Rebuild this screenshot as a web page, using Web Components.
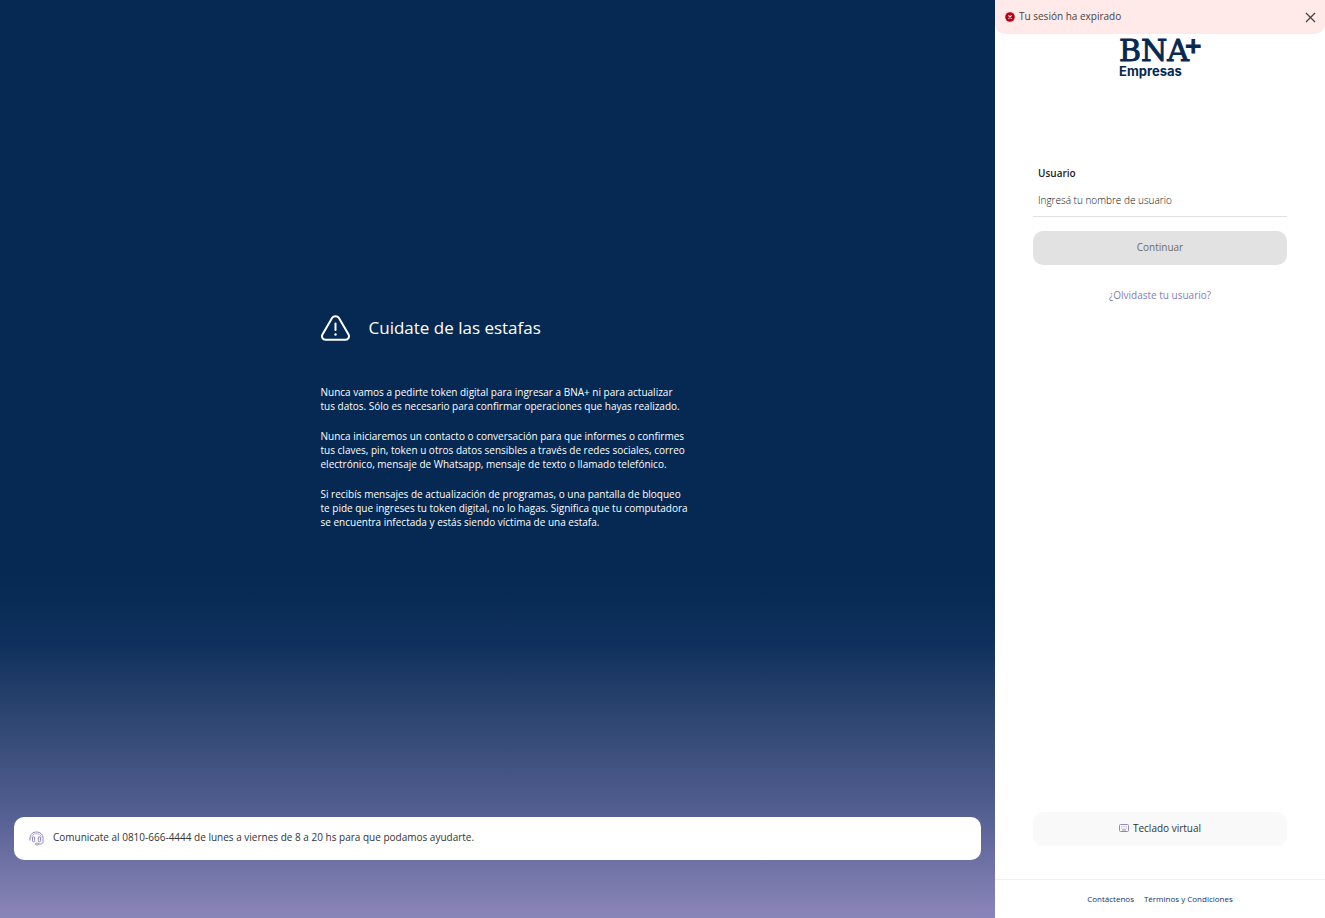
<!DOCTYPE html>
<html lang="es">
<head>
<meta charset="utf-8">
<meta name="viewport" content="width=device-width, initial-scale=1">
<title>BNA+ Empresas</title>
<style>
  body { margin: 0; font-family: "Open Sans", sans-serif; font-size: 10px; line-height: 14px; color: #333; background: #fff; }
</style>
</head>
<body>
<bna-login-page>
  <bna-fraud-warning slot="info" heading="Cuidate de las estafas">
    <p>Nunca vamos a pedirte token digital para ingresar a BNA+ ni para actualizar<br>tus datos. Sólo es necesario para confirmar operaciones que hayas realizado.</p>
    <p>Nunca iniciaremos un contacto o conversación para que informes o confirmes<br>tus claves, pin, token u otros datos sensibles a través de redes sociales, correo<br>electrónico, mensaje de Whatsapp, mensaje de texto o llamado telefónico.</p>
    <p>Si recibís mensajes de actualización de programas, o una pantalla de bloqueo<br>te pide que ingreses tu token digital, no lo hagas. Significa que tu computadora<br>se encuentra infectada y estás siendo víctima de una estafa.</p>
  </bna-fraud-warning>
  <bna-contact-bar slot="contact">Comunicate al 0810-666-4444 de lunes a viernes de 8 a 20 hs para que podamos ayudarte.</bna-contact-bar>
  <bna-alert slot="alert">Tu sesión ha expirado</bna-alert>
  <bna-logo slot="logo"></bna-logo>
  <bna-user-form slot="form"></bna-user-form>
  <bna-keyboard-button slot="keyboard">Teclado virtual</bna-keyboard-button>
  <bna-footer slot="footer"></bna-footer>
</bna-login-page>
<script>
  function define(name, html) {
    const template = document.createElement('template');
    template.innerHTML = html;
    customElements.define(name, class extends HTMLElement {
      constructor() {
        super();
        this.attachShadow({ mode: 'open' }).append(template.content.cloneNode(true));
      }
      connectedCallback() {
        const h = this.shadowRoot.querySelector('[data-heading]');
        if (h) h.textContent = this.getAttribute('heading');
      }
    });
  }

  define('bna-login-page', `
    <style>
      :host { display: grid; grid-template-columns: minmax(0, 1fr) 330px; min-height: 100vh; }
      .info { display: flex; flex-direction: column; background: linear-gradient(#052952 0%, #052952 63%, #0f305c 70%, #314873 79%, #525d90 88%, #8b86b9 100%); }
      .center { flex: 1; display: flex; align-items: center; justify-content: center; padding-top: 26px; }
      .contact { padding: 0 14px 58px; }
      aside { display: flex; flex-direction: column; background: #fff; }
      .logo { display: flex; justify-content: center; padding-top: 2px; }
      .form { padding: 86px 38px 0; }
      .keyboard { margin-top: auto; padding: 0 38px 33px; }
    </style>
    <main class="info">
      <div class="center"><slot name="info"></slot></div>
      <div class="contact"><slot name="contact"></slot></div>
    </main>
    <aside>
      <slot name="alert"></slot>
      <div class="logo"><slot name="logo"></slot></div>
      <div class="form"><slot name="form"></slot></div>
      <div class="keyboard"><slot name="keyboard"></slot></div>
      <slot name="footer"></slot>
    </aside>`);

  define('bna-fraud-warning', `
    <style>
      :host { display: block; width: 354px; color: #fff; }
      header { display: flex; align-items: center; gap: 19px; margin-bottom: 44px; }
      h1 { margin: 0; font-size: 17px; line-height: 26px; font-weight: 400; }
      svg { display: block; }
      .body { display: grid; gap: 16px; white-space: nowrap; font-weight: 400; }
      ::slotted(p) { margin: 0; }
    </style>
    <header>
      <svg width="29" height="26" viewBox="0 0 29 26" fill="none" stroke="#fff" stroke-width="2" stroke-linecap="round" aria-hidden="true">
        <path d="M11.2 2.8C12.6.6 16.4.6 17.8 2.8L27.4 19.2C28.9 21.8 27.4 24.7 24.4 24.7H4.6C1.6 24.7.1 21.8 1.6 19.2Z"/>
        <path d="M14.5 8.5V15"/><circle cx="14.5" cy="19.5" r="1.2" fill="#fff" stroke="none"/>
      </svg>
      <h1 data-heading></h1>
    </header>
    <div class="body"><slot></slot></div>`);

  define('bna-contact-bar', `
    <style>
      :host { display: flex; align-items: center; gap: 9px; padding: 13px 15px 14px; background: #fff; border-radius: 10px; color: #333; }
      svg { display: block; flex: none; }
      span { padding-bottom: 2px; }
    </style>
    <svg width="15" height="16" viewBox="0 -1 15 16" fill="none" stroke="#8b83bd" stroke-width="1" aria-hidden="true">
      <path d="M1 8V7.2C1 3.4 3.8 1 7.5 1S14 3.4 14 7.2V10.5C14 12.2 13 13 11.5 13H9.5"/>
      <path d="M2.7 6.5C3 4 5 2.7 7.5 2.7S12 4 12.3 6.5" stroke-width=".6"/>
      <rect x="3.5" y="5.8" width="2.2" height="5" rx="1.1"/><rect x="9.3" y="5.8" width="2.2" height="5" rx="1.1"/>
      <path d="M1 7.5V9.5"/><rect x="6.5" y="12.2" width="3" height="1.8" rx=".9"/>
    </svg>
    <span><slot></slot></span>`);

  define('bna-alert', `
    <style>
      :host { display: flex; align-items: center; gap: 4px; height: 34px; box-sizing: border-box; padding: 0 9px 0 10px; background: #ffe9e9; border-radius: 0 0 10px 10px; color: #444; }
      span { flex: 1; padding-bottom: 2px; }
      svg { display: block; flex: none; }
      button { border: 0; background: none; padding: 0; }
    </style>
    <svg width="10" height="10" viewBox="0 0 10 10" aria-hidden="true"><circle cx="5" cy="5" r="4.8" fill="#b90012"/><path d="M3.4 3.4 6.6 6.6M6.6 3.4 3.4 6.6" stroke="#fff" stroke-width="1.1"/></svg>
    <span role="alert"><slot></slot></span>
    <button type="button" aria-label="Cerrar"><svg width="11" height="11" viewBox="0 0 11 11" stroke="#444" stroke-width="1.3"><path d="M1 1 10 10M10 1 1 10"/></svg></button>`);

  define('bna-logo', `
    <style>
      :host { display: block; color: #052952; }
      svg { display: block; overflow: visible; }
      .name { font: 400 30px "DejaVu Serif", serif; }
      .plus { font: 700 22px "DejaVu Sans", sans-serif; }
      .segment { font: 700 13px Inter, sans-serif; }
    </style>
    <svg width="82" height="44" viewBox="0 0 82 44" fill="currentColor" role="img" aria-label="BNA+ Empresas">
      <text class="name" x="0" y="25" stroke="currentColor" stroke-width="1">BNA<tspan class="plus" x="65" y="17">+</tspan></text>
      <text class="segment" x="0" y="40">Empresas</text>
    </svg>`);

  define('bna-user-form', `
    <style>
      :host { display: block; }
      form { display: flex; flex-direction: column; margin: 0; }
      label { padding: 0 5px; font-weight: 600; color: #222; }
      input { width: 100%; height: 37px; box-sizing: border-box; padding: 5px 5px 1px; border: 0; border-bottom: 1px solid #e1e1e1; border-radius: 0; background: none; font: inherit; font-weight: 300; color: #333; outline: 0; }
      input::placeholder { color: #111; opacity: 1; }
      button { height: 34px; margin: 14px 0 23px; padding: 0 0 2px; border: 0; border-radius: 10px; background: #e2e2e2; font: inherit; color: #6b6b6b; }
      a { align-self: center; color: #857dba; text-decoration: none; }
    </style>
    <form>
      <label for="user">Usuario</label>
      <input id="user" type="text" placeholder="Ingresá tu nombre de usuario">
      <button type="submit" disabled>Continuar</button>
      <a href="#recuperar">¿Olvidaste tu usuario?</a>
    </form>`);

  define('bna-keyboard-button', `
    <style>
      :host { display: block; }
      button { display: flex; align-items: center; justify-content: center; gap: 4px; width: 100%; height: 34px; padding: 0 0 2px; border: 0; border-radius: 10px; background: #f9f9f9; font: inherit; color: #333; }
      svg { display: block; }
    </style>
    <button type="button">
      <svg width="10" height="8" viewBox="0 0 10 8" fill="none" stroke="#9189c0" stroke-width="1" aria-hidden="true"><rect x=".5" y=".5" width="9" height="7" rx="1"/><path d="M2 2.5H8M2 4.2H8" stroke-dasharray="1 .65" stroke-width=".8" opacity=".6"/><path d="M3 6H7"/></svg>
      <slot></slot>
    </button>`);

  define('bna-footer', `
    <style>
      :host { display: block; border-top: 1px solid #f0f0f0; }
      nav { display: flex; justify-content: center; gap: 10px; padding: 12px 0; font-size: 8px; }
      a { color: #0b3566; text-decoration: none; }
    </style>
    <nav><a href="#contacto">Contáctenos</a><a href="#terminos">Términos y Condiciones</a></nav>`);
</script>
</body>
</html>
